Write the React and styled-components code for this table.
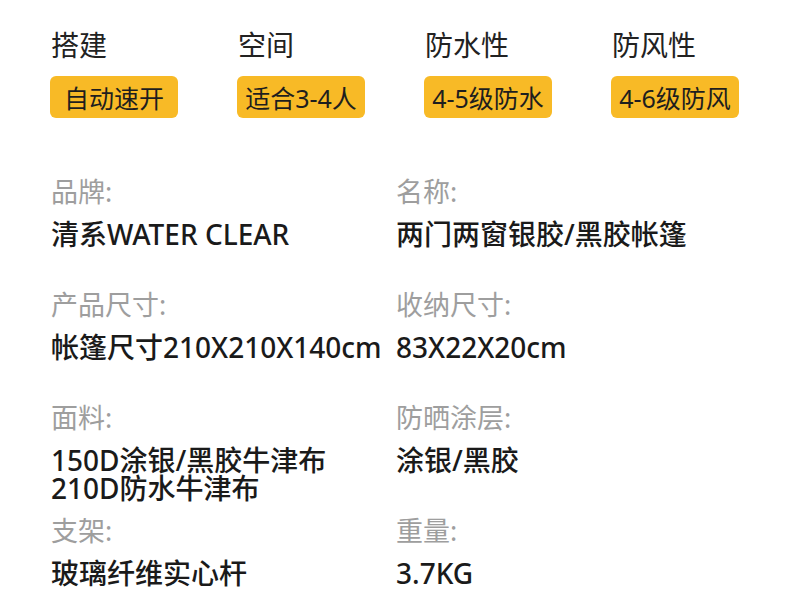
import styled, { createGlobalStyle } from 'styled-components';

const GlobalStyle = createGlobalStyle`
  html, body {
    margin: 0;
    padding: 0;
    background: #ffffff;
  }
  body {
    font-family: "Noto Sans", "Noto Sans CJK SC", sans-serif;
  }
`;

const Page = styled.div`
  width: 790px;
  height: 616px;
  box-sizing: border-box;
  padding: 29px 0 0 50px;
  overflow: hidden;
`;

const FeatureRow = styled.div`
  display: grid;
  grid-template-columns: repeat(4, 187px);
`;

const Feature = styled.div`
  display: flex;
  flex-direction: column;
  align-items: flex-start;
  gap: 15px;
`;

const FeatureTitle = styled.div`
  font-size: 28px;
  line-height: 32px;
  color: #222;
  padding-left: 1px;
`;

const Badge = styled.div`
  width: 128px;
  height: 42px;
  display: flex;
  align-items: center;
  justify-content: center;
  background: #f8ba26;
  border-radius: 6px;
  font-size: 25px;
  color: #1e1e1e;
  white-space: nowrap;
`;

const InfoGrid = styled.div`
  margin-top: 59px;
  display: grid;
  grid-template-columns: 345px 1fr;
  grid-auto-rows: 113px;
  padding-left: 1px;
`;

const InfoCell = styled.div`
  display: flex;
  flex-direction: column;
`;

const Label = styled.div`
  font-size: 27px;
  line-height: 30px;
  color: #9e9e9e;
`;

const Value = styled.div`
  margin-top: 13px;
  font-size: 28px;
  line-height: 28px;
  font-weight: 500;
  color: #1a1a1a;
  white-space: nowrap;
`;

const features = [
  { title: '搭建', badge: '自动速开' },
  { title: '空间', badge: '适合3-4人' },
  { title: '防水性', badge: '4-5级防水' },
  { title: '防风性', badge: '4-6级防风' },
];

const specs = [
  { label: '品牌:', value: ['清系WATER CLEAR'] },
  { label: '名称:', value: ['两门两窗银胶/黑胶帐篷'] },
  { label: '产品尺寸:', value: ['帐篷尺寸210X210X140cm'] },
  { label: '收纳尺寸:', value: ['83X22X20cm'] },
  { label: '面料:', value: ['150D涂银/黑胶牛津布', '210D防水牛津布'] },
  { label: '防晒涂层:', value: ['涂银/黑胶'] },
  { label: '支架:', value: ['玻璃纤维实心杆'] },
  { label: '重量:', value: ['3.7KG'] },
];

export default function App() {
  return (
    <>
      <GlobalStyle />
      <Page>
        <FeatureRow>
          {features.map(f => (
            <Feature key={f.title}>
              <FeatureTitle>{f.title}</FeatureTitle>
              <Badge>{f.badge}</Badge>
            </Feature>
          ))}
        </FeatureRow>
        <InfoGrid>
          {specs.map(s => (
            <InfoCell key={s.label}>
              <Label>{s.label}</Label>
              <Value>
                {s.value.map(line => (
                  <div key={line}>{line}</div>
                ))}
              </Value>
            </InfoCell>
          ))}
        </InfoGrid>
      </Page>
    </>
  );
}
